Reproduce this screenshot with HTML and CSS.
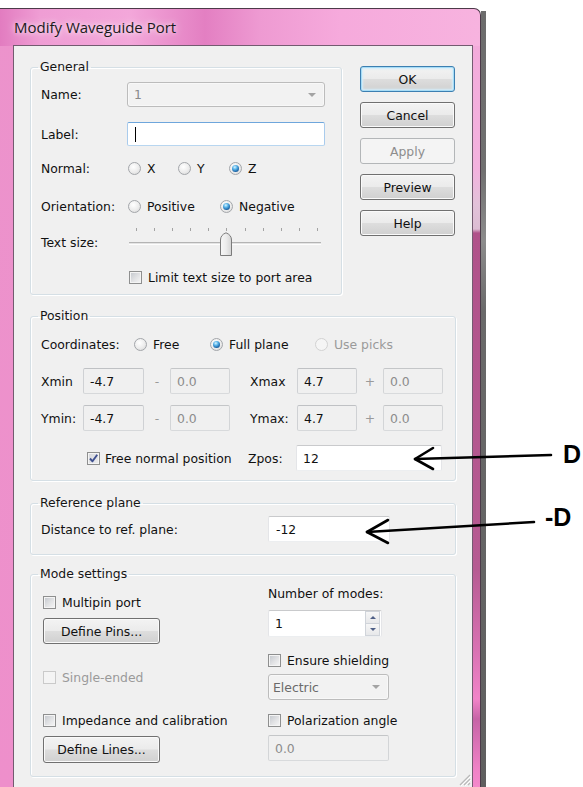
FILE: index.html
```html
<!DOCTYPE html>
<html>
<head>
<meta charset="utf-8">
<title>Modify Waveguide Port</title>
<link rel="stylesheet" href="styles.css">
</head>
<body>
<div class="window">
  <div class="titlebar">Modify Waveguide Port</div>
  <div class="client">
    <div class="top">
      <fieldset class="group general">
        <legend>General</legend>
        <div class="frow name-row">
          <span class="flabel">Name:</span>
          <div class="combo combo-off name-combo"><span>1</span><span class="caret"></span></div>
        </div>
        <div class="frow label-row">
          <span class="flabel">Label:</span>
          <div class="tb tb-focus label-box"><span class="text-caret"></span></div>
        </div>
        <div class="frow normal-row">
          <span class="flabel">Normal:</span>
          <div class="choices">
            <span class="opt opt-x"><span class="radio"></span>X</span>
            <span class="opt opt-y"><span class="radio"></span>Y</span>
            <span class="opt"><span class="radio on"></span>Z</span>
          </div>
        </div>
        <div class="frow orient-row">
          <span class="flabel">Orientation:</span>
          <div class="choices">
            <span class="opt opt-pos"><span class="radio"></span>Positive</span>
            <span class="opt"><span class="radio on"></span>Negative</span>
          </div>
        </div>
        <div class="frow size-row">
          <span class="flabel">Text size:</span>
          <div class="slider">
            <div class="ticks">
              <i></i><i></i><i></i><i></i><i></i><i></i><i></i><i></i><i></i><i></i><i></i>
            </div>
            <div class="track"></div>
            <svg class="thumb" width="14" height="25" viewBox="0 0 14 25">
              <defs>
                <linearGradient id="thumbFill" x1="0" y1="0" x2="1" y2="0">
                  <stop offset="0" stop-color="#f7f7f7"/>
                  <stop offset="0.5" stop-color="#ececec"/>
                  <stop offset="1" stop-color="#d4d4d4"/>
                </linearGradient>
              </defs>
              <path d="M1.5 23.5 V8 Q1.5 3 7 0.8 Q12.5 3 12.5 8 V23.5 Z" fill="url(#thumbFill)" stroke="#7b7b7b" stroke-width="1"/>
            </svg>
          </div>
        </div>
        <div class="frow limit-row">
          <span class="flabel"></span>
          <span class="opt limit-opt"><span class="cb"></span>Limit text size to port area</span>
        </div>
      </fieldset>

      <div class="buttons">
        <button class="btn btn-default">OK</button>
        <button class="btn">Cancel</button>
        <button class="btn btn-off">Apply</button>
        <button class="btn">Preview</button>
        <button class="btn">Help</button>
      </div>
    </div>

    <fieldset class="group position">
      <legend>Position</legend>
      <div class="prow coord-row">
        <span class="coord-label">Coordinates:</span>
        <span class="opt opt-free"><span class="radio"></span>Free</span>
        <span class="opt opt-full"><span class="radio on"></span>Full plane</span>
        <span class="opt opt-off"><span class="radio radio-off"></span>Use picks</span>
      </div>
      <div class="prow range-row x-row">
        <span>Xmin</span>
        <div class="tb tb-ro">-4.7</div>
        <span class="sign">-</span>
        <div class="tb tb-off">0.0</div>
        <span></span>
        <span>Xmax</span>
        <div class="tb tb-ro">4.7</div>
        <span class="sign">+</span>
        <div class="tb tb-off">0.0</div>
      </div>
      <div class="prow range-row y-row">
        <span>Ymin:</span>
        <div class="tb tb-ro">-4.7</div>
        <span class="sign">-</span>
        <div class="tb tb-off">0.0</div>
        <span></span>
        <span>Ymax:</span>
        <div class="tb tb-ro">4.7</div>
        <span class="sign">+</span>
        <div class="tb tb-off">0.0</div>
      </div>
      <div class="prow z-row">
        <span class="opt free-normal">
          <span class="cb cb-on">
            <svg width="11" height="11" viewBox="0 0 11 11"><path d="M2 5.5 L4.5 8.3 L9.2 1.8" fill="none" stroke="#3e4f8f" stroke-width="1.9" stroke-linejoin="round"/></svg>
          </span>Free normal position
        </span>
        <span class="zpos-label">Zpos:</span>
        <div class="tb tb-plain zpos-box">12</div>
      </div>
    </fieldset>

    <fieldset class="group refplane">
      <legend>Reference plane</legend>
      <div class="prow ref-row">
        <span class="ref-label">Distance to ref. plane:</span>
        <div class="tb tb-plain ref-box">-12</div>
      </div>
    </fieldset>

    <fieldset class="group modes">
      <legend>Mode settings</legend>
      <div class="mode-cols">
        <div class="mode-left">
          <span class="opt mrow multipin"><span class="cb"></span>Multipin port</span>
          <button class="btn btn-wide pins-btn">Define Pins...</button>
          <span class="opt opt-off mrow single"><span class="cb cb-off"></span>Single-ended</span>
          <span class="opt mrow imped"><span class="cb"></span>Impedance and calibration</span>
          <button class="btn btn-wide lines-btn">Define Lines...</button>
        </div>
        <div class="mode-right">
          <span class="modes-label">Number of modes:</span>
          <div class="tb tb-plain spin">
            <span>1</span>
            <span class="spin-btns">
              <span class="spin-btn"><i class="up"></i></span>
              <span class="spin-btn"><i class="down"></i></span>
            </span>
          </div>
          <span class="opt mrow shield"><span class="cb"></span>Ensure shielding</span>
          <div class="combo combo-off electric"><span>Electric</span><span class="caret"></span></div>
          <span class="opt mrow polar"><span class="cb"></span>Polarization angle</span>
          <div class="tb tb-off angle-box">0.0</div>
        </div>
      </div>
    </fieldset>

    <svg class="grip" width="14" height="14" viewBox="0 0 14 14">
      <path d="M13 3 L3 13 M13 7 L7 13 M13 11 L11 13" stroke="#b9b9b9" stroke-width="1.2"/>
      <path d="M14 4 L4 14 M14 8 L8 14" stroke="#ffffff" stroke-width="1"/>
    </svg>
  </div>
</div>

<svg class="annot" width="583" height="787" viewBox="0 0 583 787">
  <g fill="none" stroke="#000" stroke-width="2.6" stroke-linecap="round" stroke-linejoin="round">
    <path d="M551 455 L415 459"/>
    <path d="M433 448 L415 459 L433 469"/>
    <path d="M534 522 L367 532"/>
    <path d="M388 520 L367 532 L388 543"/>
  </g>
</svg>
<span class="mark mark-d">D</span>
<span class="mark mark-md">-D</span>
</body>
</html>
```

FILE: styles.css
```css
* {
  box-sizing: border-box;
}

html,
body {
  margin: 0;
}

body {
  position: relative;
  width: 583px;
  height: 787px;
  overflow: hidden;
  background: #fff;
  font-family: "DejaVu Sans", "Liberation Sans", sans-serif;
  font-size: 12.4px;
  color: #111;
}

/* ---------- window frame ---------- */

.window {
  position: relative;
  margin-top: 8px;
  width: 481px;
  height: 782px;
  display: flex;
  flex-direction: column;
  padding: 0 7px 0 13px;
  border-top: 1px solid #4c3a49;
  border-right: 1px solid #4c3a49;
  border-top-right-radius: 7px;
  background:
    linear-gradient(to right, #e27cc0 0, #ef9dd4 40px, #f3a7da 130px, #e37fc2 205px, #ee9ad2 260px, #f6aadc 340px, #f7b3df 480px) left top / 100% 37px no-repeat,
    linear-gradient(to bottom, #f3a9da 0, #f3b2de 160px, #e2c2d9 196px, #dcbdd3 220px, #b0528a 224px, #b65b92 560px, #d872b2 640px, #f184c8 690px, #c664a6 710px, #ef82c6 760px, #f58bcc 782px) right top / 8px 100% no-repeat,
    linear-gradient(to bottom, #ec93cc, #ee8fcb);
}

.window::after {
  content: "";
  position: absolute;
  top: 2px;
  right: -6px;
  width: 5px;
  height: 100%;
  background: linear-gradient(to bottom, #6c6c6c 0, #707070 160px, #8c8c8c 230px, #6a6a6a 300px, #5f5f5f 100%);
}

.titlebar {
  height: 36px;
  display: flex;
  align-items: center;
  padding-left: 1px;
  font-family: "Open Sans", "DejaVu Sans", sans-serif;
  font-size: 15px;
  color: #1b1b1b;
  text-shadow: 0 0 9px rgba(255, 255, 255, 0.85), 0 0 4px rgba(255, 255, 255, 0.6);
}

.client {
  position: relative;
  flex: 1;
  border: 1px solid #735b70;
  background: #f0f0f0;
  padding: 14px 0 0 16px;
}

/* ---------- group boxes ---------- */

.group {
  margin: 0;
  min-width: 0;
  border: 1px solid #d5dfe5;
  border-radius: 3px;
  box-shadow: inset 1px 1px 0 #fff, 1px 1px 0 #fff;
}

.group legend {
  padding: 0 2px;
  margin-left: -3px;
  line-height: 14px;
  color: #151515;
}

.top {
  display: flex;
  align-items: flex-start;
}

.general {
  width: 312px;
  padding: 8px 16px 9px 10px;
}

.frow {
  display: flex;
  align-items: center;
}

.flabel {
  width: 86px;
  flex: none;
}

.name-row { height: 25px; }
.label-row { height: 24px; margin-top: 15px; }
.normal-row { height: 20px; margin-top: 12px; }
.orient-row { height: 20px; margin-top: 18px; }
.size-row { height: 32px; margin-top: 10px; }
.limit-row { height: 16px; margin-top: 11px; }

.choices {
  display: flex;
  align-items: center;
  margin-left: 1px;
}

.opt {
  display: inline-flex;
  align-items: center;
  gap: 6px;
  white-space: nowrap;
}

.opt-x { width: 50px; }
.opt-y { width: 51px; }
.opt-pos { width: 92px; }

.opt-off {
  color: #9a9a9a;
}

/* ---------- radio buttons ---------- */

.radio {
  position: relative;
  flex: none;
  width: 13px;
  height: 13px;
  border-radius: 50%;
  border: 1px solid #a3a6aa;
  background: radial-gradient(circle at 40% 35%, #ffffff 0, #ececec 55%, #d4d4d4 100%);
}

.radio.on::after {
  content: "";
  position: absolute;
  left: 2px;
  top: 2px;
  width: 7px;
  height: 7px;
  border-radius: 50%;
  background: radial-gradient(circle at 40% 32%, #d8f4ff 0, #56b2e8 35%, #1e65a6 70%, #123f73 100%);
}

.radio-off {
  border-color: #d2d2d2;
  background: #f5f5f5;
}

/* ---------- check boxes ---------- */

.cb {
  position: relative;
  flex: none;
  width: 13px;
  height: 13px;
  border: 1px solid #8e8f8f;
  background: linear-gradient(135deg, #c2c6cc 0, #e2e3e5 55%, #f7f7f7 100%);
  box-shadow: inset 0 0 0 1px #f4f4f4;
}

.cb svg {
  position: absolute;
  left: 0;
  top: 0;
}

.cb-on {
  background: linear-gradient(135deg, #d6d8dc 0, #ececee 100%);
}

.cb-off {
  border-color: #cacaca;
  background: #f4f4f4;
  box-shadow: none;
}

.limit-opt {
  margin-left: 2px;
}

/* ---------- text boxes & combos ---------- */

.tb {
  display: flex;
  align-items: center;
  height: 26px;
  padding-left: 6px;
  border: 1px solid;
  border-color: #abadb3 #dbdfe6 #e3e9ef #e2e3ea;
  border-radius: 2px;
  background: #fff;
}

.tb-focus {
  border-color: #6ea6dc #a9cbec #b8d6f0 #a9cbec;
}

.tb-ro {
  background: #f0f0f0;
  border-color: #bfc1c4 #cfd1d4 #d6d8da #cfd1d4;
  color: #111;
}

.tb-off {
  background: #f0f0f0;
  border-color: #c4c6c8 #d3d5d7 #d8dadc #d3d5d7;
  color: #8c8c8c;
}

.tb-plain {
  border-color: #c9cacc #e4e5e8 #eceef0 #e4e5e8;
}

.label-box {
  width: 198px;
  height: 24px;
}

.text-caret {
  width: 1px;
  height: 15px;
  margin-left: 1px;
  background: #000;
}

.combo {
  display: flex;
  align-items: center;
  justify-content: space-between;
  height: 26px;
  padding: 0 8px 0 6px;
  border: 1px solid #bcbcbc;
  border-radius: 3px;
  background: #f2f2f2;
  box-shadow: inset 0 0 0 1px #f8f8f8;
}

.combo-off {
  color: #8a8a8a;
}

.name-combo {
  width: 198px;
  height: 25px;
}

.caret {
  width: 0;
  height: 0;
  border-left: 4px solid transparent;
  border-right: 4px solid transparent;
  border-top: 4px solid #a3a3a3;
}

/* ---------- slider ---------- */

.slider {
  position: relative;
  width: 198px;
  height: 32px;
}

.ticks {
  display: flex;
  justify-content: space-between;
  margin: 2px 7px 0 9px;
}

.ticks i {
  width: 1px;
  height: 3px;
  background: #a3a3a3;
}

.track {
  margin: 11px 4px 0 2px;
  height: 3px;
  border-top: 1px solid #b4b4b4;
  border-bottom: 1px solid #fdfdfd;
  background: #e4e4e4;
}

.thumb {
  position: absolute;
  left: 92px;
  top: 6px;
}

/* ---------- buttons ---------- */

.buttons {
  display: flex;
  flex-direction: column;
  gap: 10px;
  margin: 6px 0 0 18px;
}

.btn {
  width: 95px;
  height: 26px;
  padding: 0;
  font: inherit;
  color: #111;
  border: 1px solid #707070;
  border-radius: 3px;
  background: linear-gradient(to bottom, #f3f3f3 0, #ebebeb 48%, #dddddd 52%, #d0d0d0 100%);
  box-shadow: inset 0 0 0 1px #fafafa;
}

.btn-default {
  border-color: #3c7fb1;
  box-shadow: inset 0 0 0 1px #a6dcf6, inset 0 0 2px 2px #d4eefb;
}

.btn-off {
  color: #8d8d8d;
  border-color: #b3b6b8;
  background: #f4f4f4;
  box-shadow: none;
}

.btn-wide {
  width: 117px;
}

/* ---------- position group ---------- */

.position {
  width: 426px;
  margin-top: 14px;
  padding: 11px 0 9px 10px;
}

.prow {
  display: flex;
  align-items: center;
}

.coord-row { height: 20px; }

.coord-label { width: 93px; }
.opt-free { width: 76px; }
.opt-full { width: 105px; }

.range-row {
  display: grid;
  grid-template-columns: 42px 61px 26px 60px 20px 47px 60px 26px 60px;
  align-items: center;
  height: 26px;
}

.range-row .tb {
  height: 26px;
}

.x-row { margin-top: 14px; }
.y-row { margin-top: 11px; }

.sign {
  text-align: center;
  color: #9a9a9a;
}

.z-row {
  height: 26px;
  margin-top: 14px;
}

.free-normal {
  width: 161px;
  margin-left: 46px;
  gap: 5px;
}

.zpos-label { width: 48px; }

.zpos-box { width: 146px; }

/* ---------- reference plane ---------- */

.refplane {
  width: 426px;
  margin-top: 15px;
  padding: 6px 0 12px 10px;
}

.ref-row { height: 26px; }

.ref-label { width: 227px; }

.ref-box { width: 122px; padding-left: 7px; }

/* ---------- mode settings ---------- */

.modes {
  width: 426px;
  margin-top: 12px;
  padding: 0 0 13px 10px;
}

.mode-cols {
  display: flex;
}

.mode-left {
  width: 227px;
  padding-left: 2px;
  display: flex;
  flex-direction: column;
  align-items: flex-start;
}

.mode-right {
  display: flex;
  flex-direction: column;
  align-items: flex-start;
}

.mrow { height: 16px; }

.multipin { margin-top: 13px; }
.pins-btn { margin-top: 8px; }
.single { margin-top: 25px; }
.imped { margin-top: 27px; }
.lines-btn { margin-top: 8px; height: 27px; }

.modes-label {
  margin-top: 6px;
  line-height: 14px;
}

.spin {
  width: 114px;
  height: 27px;
  margin-top: 9px;
  padding-right: 1px;
  justify-content: space-between;
}

.spin-btns {
  display: flex;
  flex-direction: column;
  width: 15px;
  height: 25px;
}

.spin-btn {
  flex: 1;
  display: flex;
  align-items: center;
  justify-content: center;
  border: 1px solid #d0d4da;
  background: linear-gradient(to bottom, #f6f6f6, #e7e8ea);
}

.spin-btn + .spin-btn {
  border-top: none;
}

.spin-btn i {
  width: 0;
  height: 0;
  border-left: 3px solid transparent;
  border-right: 3px solid transparent;
}

.spin-btn .up { border-bottom: 3px solid #4e5f86; }
.spin-btn .down { border-top: 3px solid #4e5f86; }

.shield { margin-top: 15px; }

.electric {
  width: 121px;
  margin-top: 6px;
  padding-left: 4px;
  color: #6a6a6a;
}

.polar { margin-top: 12px; }

.angle-box {
  width: 121px;
  margin-top: 7px;
}

.grip {
  position: absolute;
  right: 1px;
  top: 726px;
}

/* ---------- annotations ---------- */

.annot {
  position: absolute;
  left: 0;
  top: 0;
  pointer-events: none;
}

.mark {
  position: absolute;
  font-family: "Liberation Sans", Arial, sans-serif;
  font-weight: bold;
  font-size: 25px;
  line-height: 25px;
  color: #000;
}

.mark-d {
  left: 563px;
  top: 442px;
}

.mark-md {
  left: 545px;
  top: 505px;
}
```
